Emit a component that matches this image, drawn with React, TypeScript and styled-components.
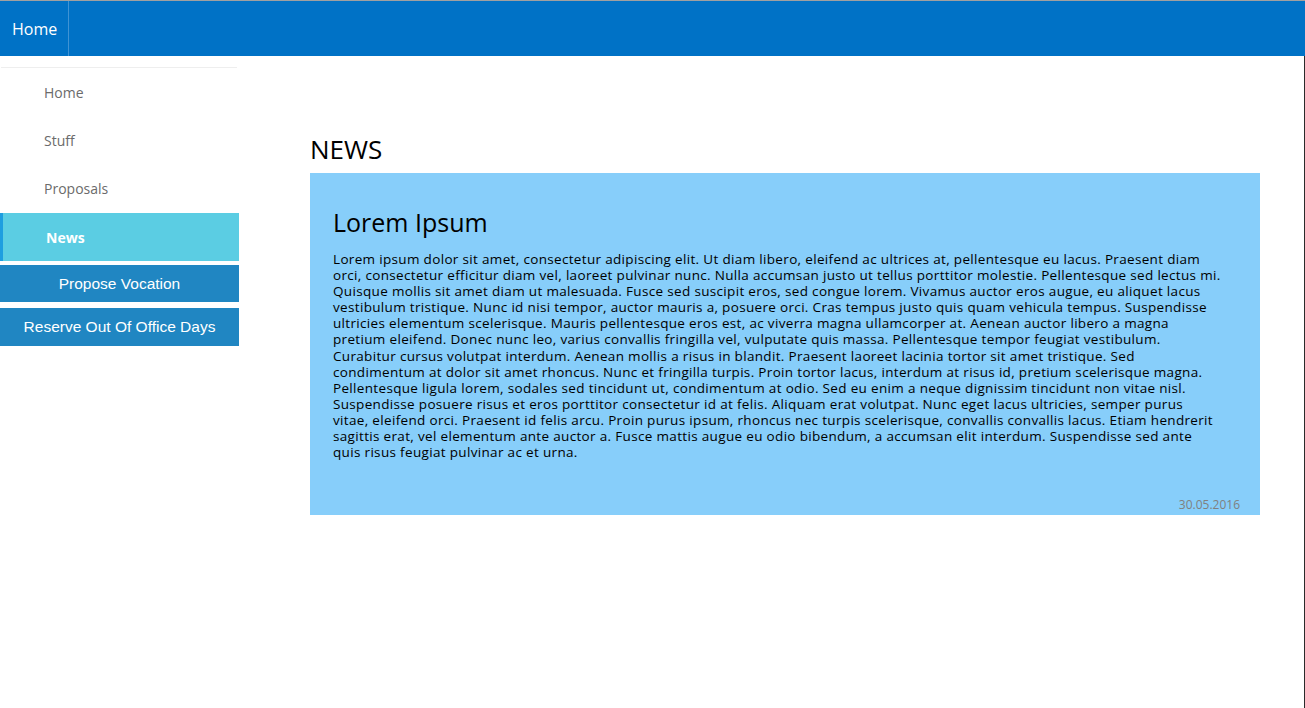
import React from "react";
import styled, { createGlobalStyle } from "styled-components";

const Global = createGlobalStyle`
  html, body { margin: 0; padding: 0; background: #fff; }
  body { font-family: "Open Sans", "Noto Sans", sans-serif; }
`;

const Page = styled.div`
  width: 1305px;
  min-height: 708px;
  display: flex;
  flex-direction: column;
  border-top: 1px solid #a0a0a0;
  box-sizing: border-box;
`;

const TopBar = styled.header`
  height: 55px;
  background: #0072c6;
  display: flex;
  align-items: stretch;
`;

const Brand = styled.a`
  display: flex;
  align-items: center;
  padding: 0 11px 0 12px;
  color: #fff;
  font-size: 16px;
  text-decoration: none;
  border-right: 1px solid #3f93d4;
`;

const Body = styled.div`
  display: flex;
  flex: 1;
  border-right: 1px solid #2b2b2b;
`;

const Sidebar = styled.nav`
  width: 239px;
  flex-shrink: 0;
  padding-top: 11px;
  display: flex;
  flex-direction: column;
`;

const Rule = styled.hr`
  margin: 0 2px 0 1px;
  border: 0;
  border-top: 1px solid #eeeeee;
  height: 0;
`;

const NavItem = styled.a<{ $active?: boolean }>`
  height: 48px;
  display: flex;
  align-items: center;
  box-sizing: border-box;
  padding-left: ${(p) => (p.$active ? "43px" : "44px")};
  font-size: 14px;
  text-decoration: none;
  color: ${(p) => (p.$active ? "#fff" : "#6b6b6b")};
  font-weight: ${(p) => (p.$active ? 700 : 400)};
  background: ${(p) => (p.$active ? "#5bcde3" : "transparent")};
  border-left: ${(p) => (p.$active ? "3px solid #1e9ee0" : "none")};
  margin-top: ${(p) => (p.$active ? "1px" : "0")};
`;

const ActionButton = styled.button<{ $h: number; $gap: number }>`
  height: ${(p) => p.$h}px;
  margin-top: ${(p) => p.$gap}px;
  border: 0;
  background: #2086c2;
  color: #fff;
  font-family: "Liberation Sans", Arial, sans-serif;
  font-size: 15.5px;
  text-align: center;
  padding: 0;
  cursor: pointer;
`;

const Main = styled.main`
  flex: 1;
  padding: 77px 0 0 71px;
`;

const Heading = styled.h2`
  margin: 0;
  font-size: 26px;
  font-weight: 400;
  line-height: 33px;
  color: #000;
`;

const Card = styled.article`
  width: 950px;
  margin-top: 7px;
  background: #87cefa;
  box-sizing: border-box;
  padding: 31px 19px 2px 23px;
  display: flex;
  flex-direction: column;
`;

const CardTitle = styled.h3`
  margin: 0 0 11px;
  font-size: 25px;
  font-weight: 400;
  line-height: 36px;
  color: #000;
`;

const CardText = styled.p`
  margin: 0;
  font-size: 13.5px;
  letter-spacing: 0.33px;
  line-height: 16.1px;
  color: #000;
`;

const TextLine = styled.span`
  display: block;
  white-space: nowrap;
`;

const CardDate = styled.div`
  align-self: flex-end;
  margin: 37px 1px 0 0;
  font-size: 12px;
  line-height: 16px;
  color: #808080;
`;

const lines = [
  "Lorem ipsum dolor sit amet, consectetur adipiscing elit. Ut diam libero, eleifend ac ultrices at, pellentesque eu lacus. Praesent diam",
  "orci, consectetur efficitur diam vel, laoreet pulvinar nunc. Nulla accumsan justo ut tellus porttitor molestie. Pellentesque sed lectus mi.",
  "Quisque mollis sit amet diam ut malesuada. Fusce sed suscipit eros, sed congue lorem. Vivamus auctor eros augue, eu aliquet lacus",
  "vestibulum tristique. Nunc id nisi tempor, auctor mauris a, posuere orci. Cras tempus justo quis quam vehicula tempus. Suspendisse",
  "ultricies elementum scelerisque. Mauris pellentesque eros est, ac viverra magna ullamcorper at. Aenean auctor libero a magna",
  "pretium eleifend. Donec nunc leo, varius convallis fringilla vel, vulputate quis massa. Pellentesque tempor feugiat vestibulum.",
  "Curabitur cursus volutpat interdum. Aenean mollis a risus in blandit. Praesent laoreet lacinia tortor sit amet tristique. Sed",
  "condimentum at dolor sit amet rhoncus. Nunc et fringilla turpis. Proin tortor lacus, interdum at risus id, pretium scelerisque magna.",
  "Pellentesque ligula lorem, sodales sed tincidunt ut, condimentum at odio. Sed eu enim a neque dignissim tincidunt non vitae nisl.",
  "Suspendisse posuere risus et eros porttitor consectetur id at felis. Aliquam erat volutpat. Nunc eget lacus ultricies, semper purus",
  "vitae, eleifend orci. Praesent id felis arcu. Proin purus ipsum, rhoncus nec turpis scelerisque, convallis convallis lacus. Etiam hendrerit",
  "sagittis erat, vel elementum ante auctor a. Fusce mattis augue eu odio bibendum, a accumsan elit interdum. Suspendisse sed ante",
  "quis risus feugiat pulvinar ac et urna.",
];

export default function App() {
  return (
    <>
      <Global />
      <Page>
        <TopBar>
          <Brand href="#">Home</Brand>
        </TopBar>
        <Body>
          <Sidebar>
            <Rule />
            <NavItem href="#">Home</NavItem>
            <NavItem href="#">Stuff</NavItem>
            <NavItem href="#">Proposals</NavItem>
            <NavItem href="#" $active>
              News
            </NavItem>
            <ActionButton $h={37} $gap={4}>Propose Vocation</ActionButton>
            <ActionButton $h={38} $gap={6}>Reserve Out Of Office Days</ActionButton>
          </Sidebar>
          <Main>
            <Heading>NEWS</Heading>
            <Card>
              <CardTitle>Lorem Ipsum</CardTitle>
              <CardText>
                {lines.map((l, i) => (
                  <TextLine key={i}>{l}</TextLine>
                ))}
              </CardText>
              <CardDate>30.05.2016</CardDate>
            </Card>
          </Main>
        </Body>
      </Page>
    </>
  );
}
